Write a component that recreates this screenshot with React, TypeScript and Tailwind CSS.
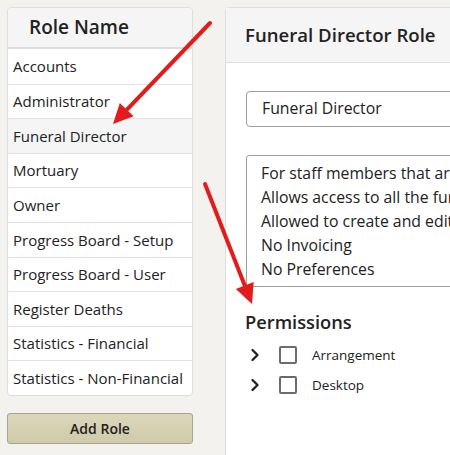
import { ChevronRight } from 'lucide-react'

const roles = [
    'Accounts',
    'Administrator',
    'Funeral Director',
    'Mortuary',
    'Owner',
    'Progress Board - Setup',
    'Progress Board - User',
    'Register Deaths',
    'Statistics - Financial',
    'Statistics - Non-Financial',
]

const description = [
    'For staff members that are Funeral Directors.',
    'Allows access to all the funeral arrangement screens.',
    'Allowed to create and edit funerals.',
    'No Invoicing',
    'No Preferences',
]

const permissions = ['Arrangement', 'Desktop']

function Arrow({ x1, y1, x2, y2 }: { x1: number; y1: number; x2: number; y2: number }) {
    // line plus a filled head at the tip
    const angle = Math.atan2(y2 - y1, x2 - x1)
    const len = 22
    const spread = 0.45
    const bx = x2 - Math.cos(angle) * (len - 4)
    const by = y2 - Math.sin(angle) * (len - 4)
    const l = [x2 - len * Math.cos(angle - spread), y2 - len * Math.sin(angle - spread)]
    const r = [x2 - len * Math.cos(angle + spread), y2 - len * Math.sin(angle + spread)]
    return (
        <g>
            <line x1={x1} y1={y1} x2={bx} y2={by} stroke="#e21b1b" strokeWidth={4} strokeLinecap="round" />
            <polygon points={`${x2},${y2} ${l[0]},${l[1]} ${r[0]},${r[1]}`} fill="#e21b1b" />
        </g>
    )
}

export default function App() {
    return (
        <div className="relative w-[450px] h-[455px] overflow-hidden bg-[#f3f2ee] font-['Open_Sans',sans-serif] text-[#222]">
            <div className="flex gap-[32px] pl-[7px] pt-[7px]">
                {/* Role list */}
                <div className="w-[186px] shrink-0">
                    <div className="bg-white border border-[#dedede] rounded-[4px] overflow-hidden">
                        <div className="h-[41px] bg-[#f5f5f5] border-b-2 border-[#dddddd] pl-[21px] flex items-center text-[19px] font-semibold">
                            Role Name
                        </div>
                        {roles.map((role, i) => (
                            <div
                                key={role}
                                className={`h-[34.6px] px-[5px] flex items-center text-[15px] whitespace-nowrap ${i > 0 ? 'border-t border-[#e2e2e2]' : ''} ${role === 'Funeral Director' ? 'bg-[#f5f5f5]' : ''}`}
                            >
                                {role}
                            </div>
                        ))}
                    </div>
                    <button
                        type="button"
                        className="mt-[17px] w-full h-[31px] rounded-[3px] border border-[#a3a396] bg-gradient-to-b from-[#dbd7bb] to-[#cfcaa7] text-[14px] font-semibold text-[#222]"
                    >
                        Add Role
                    </button>
                </div>

                {/* Role details */}
                <div className="w-[320px] shrink-0 h-[470px] bg-white border border-[#dedede] rounded-tl-[4px]">
                    <div className="h-[55px] bg-[#f5f5f5] border-b border-[#dddddd] pl-[19px] flex items-center text-[18.6px] font-semibold">
                        Funeral Director Role
                    </div>
                    <div className="pl-[20px] pt-[28px]">
                        <div className="h-[36px] border border-[#9e9e9e] rounded-[4px] pl-[15px] flex items-center text-[15.8px]">
                            Funeral Director
                        </div>
                        <div className="mt-[28px] h-[132px] border border-[#9e9e9e] rounded-[3px] pl-[14px] pt-[5px] text-[15.8px] leading-[24px] whitespace-nowrap overflow-hidden">
                            {description.map((line) => (
                                <div key={line}>{line}</div>
                            ))}
                        </div>
                        <div className="mt-[23px] -ml-[1px] text-[18.3px] font-semibold leading-[24px]">Permissions</div>
                        <div className="mt-[12px] flex flex-col gap-[12px]">
                            {permissions.map((p) => (
                                <div key={p} className="flex items-center h-[18px] text-[13.5px]">
                                    <ChevronRight className="w-[20px] h-[20px] ml-[-1px] text-[#222]" strokeWidth={2.8} />
                                    <span className="ml-[14px] w-[18px] h-[18px] border-2 border-[#6b6b6b] rounded-[2px] bg-white" />
                                    <span className="ml-[15px]">{p}</span>
                                </div>
                            ))}
                        </div>
                    </div>
                </div>
            </div>

            <svg className="absolute inset-0 pointer-events-none" width={450} height={455}>
                <Arrow x1={210} y1={23} x2={113} y2={124} />
                <Arrow x1={205} y1={184} x2={252} y2={304} />
            </svg>
        </div>
    )
}
